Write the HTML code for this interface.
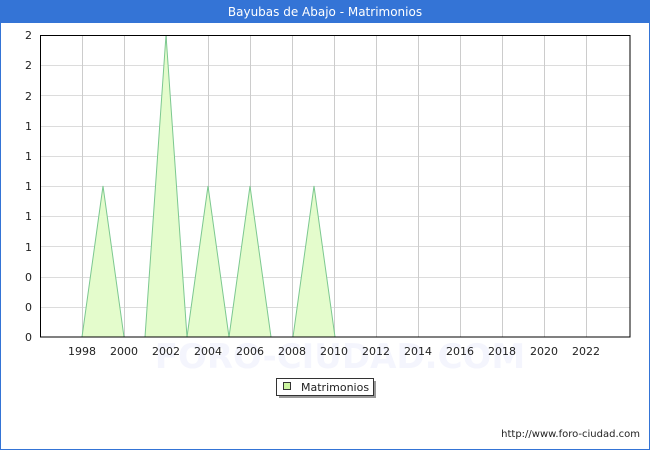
<html><head><style>body{margin:0;width:650px;height:450px;overflow:hidden;font-family:"DejaVu Sans","Liberation Sans",sans-serif;}</style></head><body>
<svg width="650" height="450" xmlns="http://www.w3.org/2000/svg" font-family="DejaVu Sans, Liberation Sans, sans-serif">
<rect x="0" y="0" width="650" height="450" fill="#fff"/>
<rect x="0.5" y="0.5" width="649" height="449" fill="none" stroke="#3474d6"/>
<rect x="0" y="0" width="650" height="23" fill="#3474d6"/>
<text x="325" y="16" fill="#fff" font-size="12" text-anchor="middle">Bayubas de Abajo - Matrimonios</text>
<text x="340" y="368" font-size="34" fill="#f4f5fd" text-anchor="middle" font-weight="bold">FORO-CIUDAD.COM</text>
<g stroke="#dcdcdc" stroke-width="1">
<line x1="40" x2="630" y1="65.5" y2="65.5"/><line x1="40" x2="630" y1="95.5" y2="95.5"/><line x1="40" x2="630" y1="126.5" y2="126.5"/><line x1="40" x2="630" y1="156.5" y2="156.5"/><line x1="40" x2="630" y1="186.5" y2="186.5"/><line x1="40" x2="630" y1="216.5" y2="216.5"/><line x1="40" x2="630" y1="246.5" y2="246.5"/><line x1="40" x2="630" y1="277.5" y2="277.5"/><line x1="40" x2="630" y1="307.5" y2="307.5"/>
</g>
<g stroke="#cccccc" stroke-width="1">
<line x1="82.5" x2="82.5" y1="35" y2="337"/><line x1="124.5" x2="124.5" y1="35" y2="337"/><line x1="166.5" x2="166.5" y1="35" y2="337"/><line x1="208.5" x2="208.5" y1="35" y2="337"/><line x1="250.5" x2="250.5" y1="35" y2="337"/><line x1="292.5" x2="292.5" y1="35" y2="337"/><line x1="334.5" x2="334.5" y1="35" y2="337"/><line x1="376.5" x2="376.5" y1="35" y2="337"/><line x1="418.5" x2="418.5" y1="35" y2="337"/><line x1="460.5" x2="460.5" y1="35" y2="337"/><line x1="502.5" x2="502.5" y1="35" y2="337"/><line x1="544.5" x2="544.5" y1="35" y2="337"/><line x1="586.5" x2="586.5" y1="35" y2="337"/>
</g>
<g fill="#e4fccc" stroke="#7cc890" stroke-width="1">
<polygon points="82,337 103,186 124,337"/>
<polygon points="145,337 166,35 187,337"/>
<polygon points="187,337 208,186 229,337"/>
<polygon points="229,337 250,186 271,337"/>
<polygon points="293,337 314,186 335,337"/>
</g>
<rect x="40.5" y="35.5" width="589.5" height="301.5" fill="none" stroke="#000"/>
<g font-size="11" fill="#222" text-anchor="end">
<text x="32" y="39">2</text><text x="32" y="69">2</text><text x="32" y="100">2</text><text x="32" y="130">1</text><text x="32" y="160">1</text><text x="32" y="190">1</text><text x="32" y="220">1</text><text x="32" y="251">1</text><text x="32" y="281">0</text><text x="32" y="311">0</text><text x="32" y="341">0</text>
</g>
<g font-size="11" fill="#222" text-anchor="middle">
<text x="82" y="355">1998</text><text x="124" y="355">2000</text><text x="166" y="355">2002</text><text x="208" y="355">2004</text><text x="250" y="355">2006</text><text x="292" y="355">2008</text><text x="334" y="355">2010</text><text x="376" y="355">2012</text><text x="418" y="355">2014</text><text x="460" y="355">2016</text><text x="502" y="355">2018</text><text x="544" y="355">2020</text><text x="586" y="355">2022</text>
</g>
<rect x="279" y="381" width="97" height="17" fill="#999"/>
<rect x="276.5" y="378.5" width="97" height="17" fill="#fff" stroke="#333"/>
<rect x="283.5" y="382.5" width="7" height="7" fill="#ccf5a0" stroke="#333"/>
<text x="301" y="391" font-size="11" fill="#222">Matrimonios</text>
<text x="640" y="437" font-size="10" fill="#222" text-anchor="end">http://www.foro-ciudad.com</text>
</svg>
</body></html>
